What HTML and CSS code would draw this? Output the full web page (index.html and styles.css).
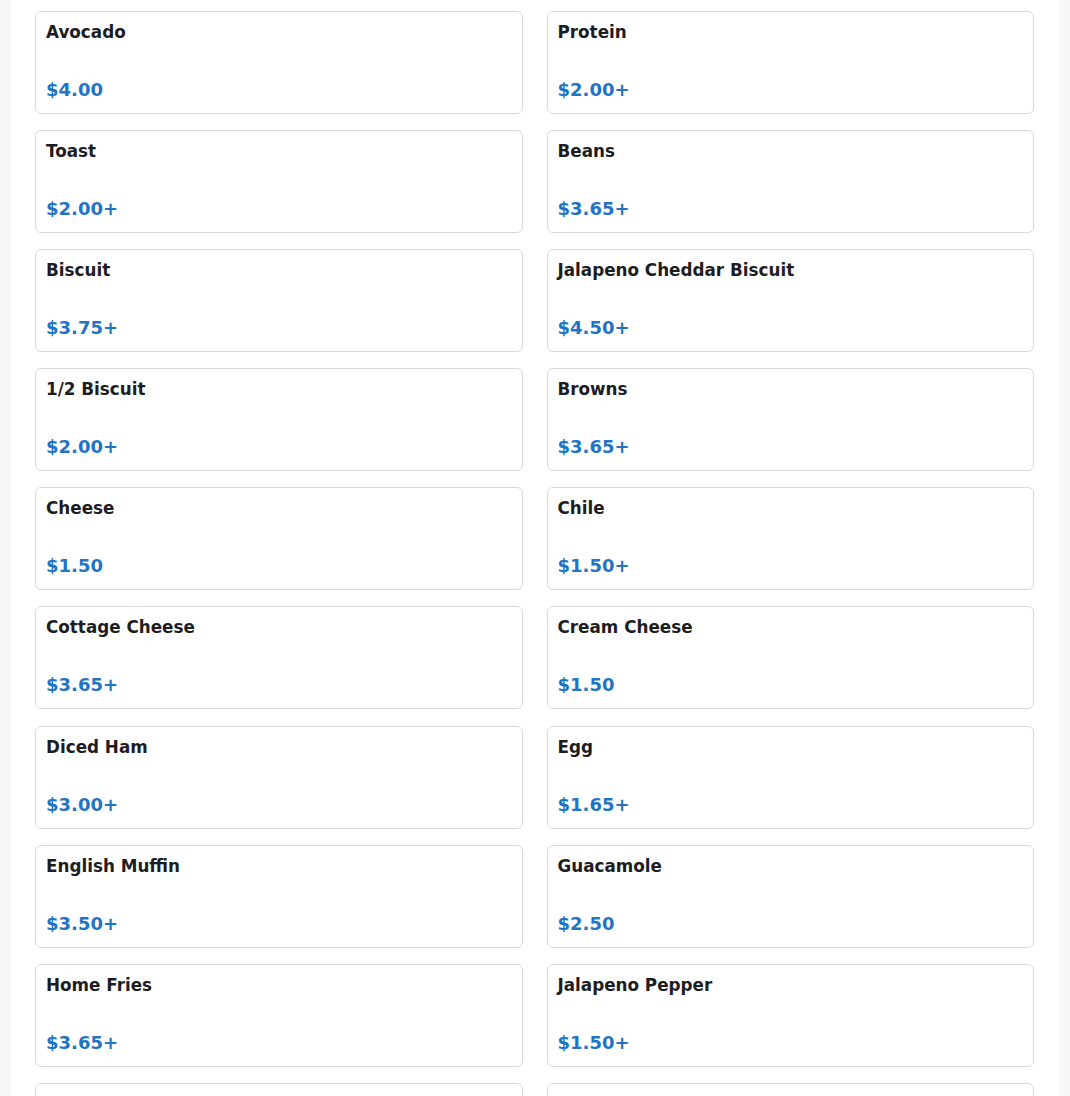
FILE: index.html
```html
<!DOCTYPE html>
<html>
<head>
<meta charset="utf-8">
<link rel="stylesheet" href="styles.css">
</head>
<body>
<main class="page">
  <div class="grid">
    <div class="card"><div class="name">Avocado</div><div class="price">$4.00</div></div>
    <div class="card"><div class="name">Protein</div><div class="price">$2.00+</div></div>
    <div class="card"><div class="name">Toast</div><div class="price">$2.00+</div></div>
    <div class="card"><div class="name">Beans</div><div class="price">$3.65+</div></div>
    <div class="card"><div class="name">Biscuit</div><div class="price">$3.75+</div></div>
    <div class="card"><div class="name">Jalapeno Cheddar Biscuit</div><div class="price">$4.50+</div></div>
    <div class="card"><div class="name">1/2 Biscuit</div><div class="price">$2.00+</div></div>
    <div class="card"><div class="name">Browns</div><div class="price">$3.65+</div></div>
    <div class="card"><div class="name">Cheese</div><div class="price">$1.50</div></div>
    <div class="card"><div class="name">Chile</div><div class="price">$1.50+</div></div>
    <div class="card"><div class="name">Cottage Cheese</div><div class="price">$3.65+</div></div>
    <div class="card"><div class="name">Cream Cheese</div><div class="price">$1.50</div></div>
    <div class="card"><div class="name">Diced Ham</div><div class="price">$3.00+</div></div>
    <div class="card"><div class="name">Egg</div><div class="price">$1.65+</div></div>
    <div class="card"><div class="name">English Muffin</div><div class="price">$3.50+</div></div>
    <div class="card"><div class="name">Guacamole</div><div class="price">$2.50</div></div>
    <div class="card"><div class="name">Home Fries</div><div class="price">$3.65+</div></div>
    <div class="card"><div class="name">Jalapeno Pepper</div><div class="price">$1.50+</div></div>
    <div class="card"><div class="name">Onions</div><div class="price">$1.00</div></div>
    <div class="card"><div class="name">Pancake</div><div class="price">$3.00+</div></div>
  </div>
</main>
</body>
</html>
```
FILE: styles.css
```css
html, body {
  margin: 0;
  padding: 0;
  background: #f8f8f8;
  font-family: "DejaVu Sans", sans-serif;
}
.page {
  margin: 0 11px;
  background: #ffffff;
  padding: 11px 25px 24px 24px;
}
.grid {
  display: grid;
  grid-template-columns: 1fr 1fr;
  column-gap: 24px;
  row-gap: 16.1px;
}
.card {
  box-sizing: border-box;
  height: 103px;
  border: 1px solid #d9d9d9;
  border-radius: 6px;
  padding: 9px 10px 11px 10px;
  display: flex;
  flex-direction: column;
  justify-content: space-between;
  background: #fff;
}
.name {
  font-weight: bold;
  font-size: 16.8px;
  line-height: 22px;
  color: #1d1d1f;
}
.price {
  font-weight: bold;
  font-size: 18px;
  line-height: 24px;
  color: #1f74c4;
}
```
